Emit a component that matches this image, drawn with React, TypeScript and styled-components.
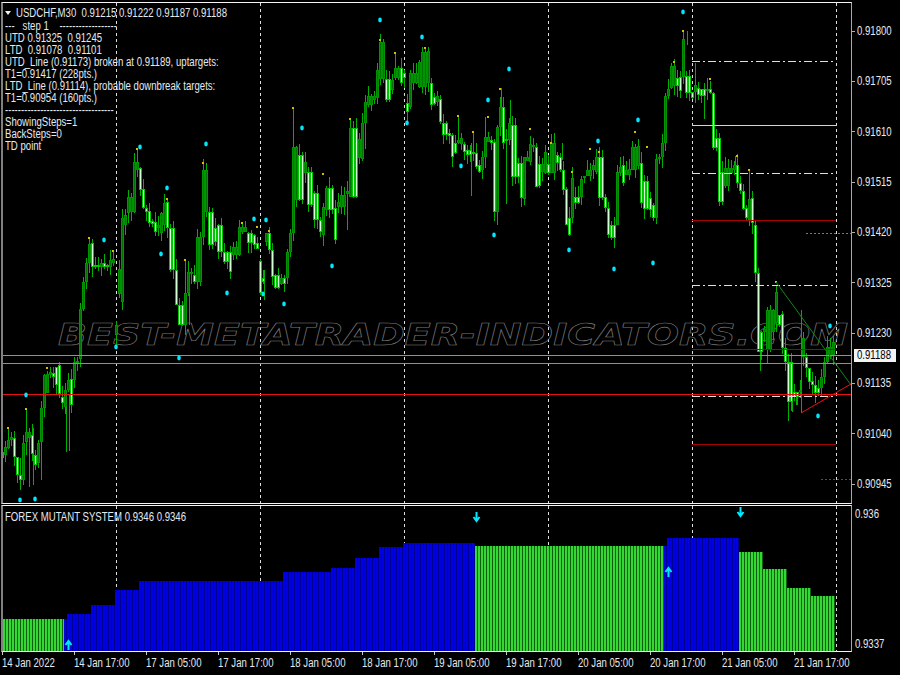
import React from "react";
import styled, { createGlobalStyle } from "styled-components";

const Global = createGlobalStyle`
  html, body { margin: 0; padding: 0; background: #000; }
`;

const FONT = `"Liberation Sans", Arial, sans-serif`;

const Terminal = styled.div`
  width: 900px;
  height: 675px;
  background: #000;
  color: #e4eaf0;
  font-family: ${FONT};
  font-size: 12px;
  display: flex;
  flex-direction: column;
  overflow: hidden;
`;
const PaneRow = styled.div<{ $h: number; $top: number }>`
  display: flex;
  height: ${(p) => p.$h}px;
  padding-top: ${(p) => p.$top}px;
  padding-left: 1px;
  box-sizing: border-box;
`;
const Plot = styled.div`
  position: relative;
  flex: 0 0 851px;
  box-sizing: border-box;
  border-top: 1px solid #f4f4f4;
  border-bottom: 1px solid #f4f4f4;
  border-left: 2px solid #808080;
  border-right: 1px solid #a8a8a8;
  svg { display: block; }
`;
const Squeezed = styled.span`
  display: block;
  width: max-content;
  white-space: pre;
  transform: scaleX(0.8);
  transform-origin: left center;
`;
const Legend = styled.div`
  position: absolute;
  left: 2px;
  top: 4px;
  line-height: 12px;
  pointer-events: none;
`;
const LegendTitle = styled.div`
  display: flex;
  align-items: center;
  gap: 5px;
  margin-bottom: 1px;
`;
const Triangle = styled.span`
  width: 0;
  height: 0;
  border-left: 3px solid transparent;
  border-right: 3px solid transparent;
  border-top: 4px solid #f0f0f0;
`;
const IndicatorCaption = styled.div`
  position: absolute;
  left: 2px;
  top: 5px;
  line-height: 12px;
`;
const PriceAxis = styled.div`
  position: relative;
  flex: 1;
  padding-top: 4px;
  display: flex;
  flex-direction: column;
`;
const PriceLabel = styled.div`
  flex: 0 0 50.33px;
  display: flex;
  align-items: center;
  gap: 2px;
  &::before {
    content: "";
    width: 3px;
    height: 1px;
    background: #b0b0b0;
  }
`;
const CurrentPrice = styled.div`
  position: absolute;
  left: 2px;
  top: 347px;
  width: 42px;
  height: 13px;
  background: #f4f4f4;
  color: #000;
  line-height: 13px;
  padding-left: 3px;
  box-sizing: border-box;
`;
const SubAxis = styled.div`
  flex: 1;
  padding: 2px 0 1px 3px;
  display: flex;
  flex-direction: column;
  justify-content: space-between;
`;
const TimeAxis = styled.div`
  display: flex;
  padding-left: 2px;
  height: 23px;
`;
const TimeLabel = styled.div`
  flex: 0 0 72px;
  position: relative;
  padding-top: 5px;
  line-height: 12px;
  &::before {
    content: "";
    position: absolute;
    left: 0;
    top: 0;
    width: 1px;
    height: 3px;
    background: #c8c8c8;
  }
`;

type C = [number, number, number];
const raw: C[] = [
[2,452,458],[5,447,455],[8,440,448],[11,437,440],[15,438,457],[18,457,475],[21,475,480],[24,443,480],[27,432,442],[30,432,438],[33,435,454],[36,455,465],[39,443,463],[42,408,442],[45,375,408],[48,374,393],[51,372,375],[54,373,377],[57,367,385],[60,365,394],[63,397,403],[66,390,407],[69,380,390],[72,379,405],[75,362,380],[78,361,363],[81,309,359],[84,282,309],[87,263,282],[90,244,263],[93,243,267],[96,265,267],[99,265,267],[102,263,267],[105,263,267],[108,265,267],[111,260,267],[114,259,263],[117,325,335],[120,269,294],[123,218,302],[126,215,225],[129,197,213],[132,197,212],[135,162,212],[138,162,170],[141,168,190],[144,189,208],[147,208,212],[150,211,223],[153,221,224],[156,222,232],[159,225,228],[162,213,233],[165,203,225],[168,202,228],[171,228,270],[176,270,305],[180,305,325],[184,293,325],[187,272,293],[191,272,274],[195,275,282],[198,237,282],[203,170,237],[207,170,212],[210,212,245],[215,228,242],[220,225,252],[225,252,262],[229,252,272],[233,247,255],[239,227,255],[243,227,232],[248,233,243],[254,235,245],[257,243,249],[260,261,293],[263,278,282],[266,233,242],[269,233,250],[272,250,277],[276,275,288],[281,278,284],[285,278,284],[288,252,278],[291,233,252],[294,147,233],[297,147,200],[300,155,200],[304,162,173],[311,172,205],[315,193,220],[319,220,232],[323,207,235],[327,188,210],[330,188,210],[334,208,240],[338,202,207],[342,195,207],[346,191,194],[350,128,197],[354,128,197],[358,139,158],[362,123,159],[365,102,123],[370,96,105],[373,96,100],[377,70,98],[382,42,79],[387,79,100],[391,80,90],[396,68,78],[400,68,83],[403,73,78],[407,103,112],[410,73,107],[414,73,83],[419,62,87],[423,52,87],[427,51,83],[431,83,105],[435,97,104],[438,96,102],[441,99,122],[444,123,135],[448,133,136],[451,135,157],[454,143,153],[457,140,143],[462,138,144],[465,144,152],[468,150,155],[472,152,154],[476,153,167],[480,165,172],[482,157,170],[485,137,157],[488,137,142],[491,140,143],[494,142,212],[498,127,212],[501,107,127],[504,107,143],[507,139,141],[510,123,140],[513,125,177],[517,163,177],[520,163,198],[523,157,199],[526,157,161],[529,144,162],[532,145,147],[534,147,187],[538,164,186],[542,164,172],[545,152,173],[549,164,173],[552,143,173],[556,155,163],[560,157,170],[563,170,190],[566,189,225],[570,218,235],[572,178,218],[577,197,203],[581,179,197],[585,176,178],[588,170,176],[592,165,170],[596,157,172],[601,157,198],[605,197,208],[608,208,235],[612,225,238],[617,172,225],[620,167,173],[624,165,183],[627,170,175],[630,169,175],[633,147,170],[638,146,166],[641,163,203],[646,181,209],[649,198,210],[652,205,218],[655,209,218],[656,159,218],[659,157,159],[661,143,157],[665,96,143],[668,89,96],[671,66,88],[675,66,86],[678,78,86],[680,77,91],[683,39,77],[686,76,93],[689,76,93],[692,92,98],[695,85,92],[698,88,95],[702,89,96],[707,89,91],[710,89,93],[713,93,148],[717,138,148],[719,138,202],[723,172,202],[726,168,186],[730,168,173],[734,165,170],[737,165,183],[740,183,191],[743,191,209],[746,208,218],[750,199,220],[753,198,223],[755,225,273],[758,273,352],[761,332,352],[765,329,332],[768,310,350],[772,310,332],[775,292,323],[779,315,325],[782,314,348],[785,348,362],[788,362,402],[792,362,402],[795,392,397],[799,390,392],[801,338,392],[804,338,357],[807,357,368],[810,368,382],[813,381,385],[815,385,393],[819,388,393],[821,377,388],[824,362,377],[827,347,362],[830,347,357],[834,342,355],
];

const extraWicks: C[] = [
[66,392,452],[69,395,451],[26,408,455],[29,430,487],[33,428,485],[41,408,480],[20,458,490],[8,428,445],
[347,183,230],[365,98,149],[471,143,196],[506,143,204],[501,88,127],[510,100,123],[497,170,225],
[695,63,103],[704,90,119],[749,170,218],[687,31,45],[788,402,421],[760,352,371],[767,315,363],[792,402,412],[796,397,405],[801,310,413],
[735,156,165],[562,143,160],[485,117,140],[458,116,135],[473,132,150],[350,119,128],[395,53,80],[380,40,50],[425,48,60],
[293,108,147],[203,163,170],[137,149,162],[167,199,205],[89,238,245],[113,251,262],[242,223,232],[185,260,290],[189,280,325],[264,270,300],
];

const rnd = (() => {
  let s = 12345;
  return () => {
    s = (s * 1664525 + 1013904223) >>> 0;
    return s / 4294967296;
  };
})();

const candles = Array.from({ length: 278 }, (_, i) => {
  const x = 2 + 3 * i;
  let best = raw[0];
  for (const r of raw) if (Math.abs(r[0] - x) < Math.abs(best[0] - x)) best = r;
  const idx = raw.indexOf(best);
  const prev = raw[Math.max(0, idx - 1)];
  const rising = best[0] === 117 || best[1] + best[2] < prev[1] + prev[2];
  return {
    x,
    top: best[1],
    bot: best[2],
    rising,
    hi: best[1] - Math.round(rnd() * 11),
    lo: best[2] + Math.round(rnd() * 11),
  };
});

const peaks = [[137,149],[203,163],[167,199],[293,108],[242,223],[89,238],[113,251],[8,428],[26,409],[47,368],[185,260],[257,227],[269,231],[380,40],[395,53],[425,48],[323,174],[350,119],[458,116],[473,132],[488,117],[500,89],[530,129],[551,143],[572,172],[590,149],[599,152],[635,132],[647,147],[674,62],[683,31],[710,79],[737,156],[749,170],[776,282]];
const dots = [[140,147],[206,144],[167,188],[254,219],[266,220],[104,240],[161,254],[227,293],[263,294],[284,304],[116,347],[179,358],[26,395],[20,500],[35,499],[380,20],[422,37],[302,128],[407,123],[461,166],[488,100],[509,69],[598,141],[638,120],[683,12],[332,266],[494,235],[569,250],[614,269],[653,263],[830,326],[818,416]];
const gridX = [116.5, 260.5, 404.5, 548.5, 692.5, 836.5];

const MainChart = () => (
  <svg width={848} height={500} viewBox="3 3 848 500">
    <g shapeRendering="crispEdges">
      {gridX.map((x) => (
        <line key={x} x1={x} x2={x} y1={3} y2={503} stroke="#dcdcdc" strokeDasharray="3 3" />
      ))}
    </g>
    <text x={58} y={345} textLength={790} lengthAdjust="spacingAndGlyphs" fontFamily="'DejaVu Sans', sans-serif" fontWeight="bold" fontStyle="italic" fontSize={30} fill="none" stroke="#7c7c7c" strokeWidth={0.6}>
      BEST-METATRADER-INDICATORS.COM
    </text>
    <g shapeRendering="crispEdges">
      {extraWicks.map(([x, a, b], i) => (
        <rect key={i} x={x} y={a} width={1} height={b - a} fill="#00b000" />
      ))}
      {candles.map((c) => (
        <g key={c.x}>
          <rect x={c.x} y={c.hi} width={1} height={c.lo - c.hi} fill="#00b000" />
          <rect x={c.x - 1} y={c.top} width={3} height={Math.max(c.bot - c.top, 1)} fill={c.rising ? "#009400" : "#00c800"} />
          <rect x={c.x} y={c.top + 1} width={1} height={Math.max(c.bot - c.top - 2, 0)} fill={c.rising ? "#007400" : "#d4ffd4"} />
        </g>
      ))}
      {peaks.map(([x, y], i) => (
        <rect key={i} x={x - 1} y={y - 1} width={2} height={2} fill="#d8c000" />
      ))}
      <line x1={3} x2={851} y1={355.5} y2={355.5} stroke="#8494a4" />
      <line x1={3} x2={851} y1={363.5} y2={363.5} stroke="#28d828" />
      <line x1={3} x2={851} y1={394.5} y2={394.5} stroke="#e81010" />
      <line x1={692} x2={833} y1={61.5} y2={61.5} stroke="#dddddd" strokeDasharray="8 3 2 3" />
      <line x1={692} x2={836} y1={125.5} y2={125.5} stroke="#f0f000" />
      <line x1={692} x2={833} y1={173.5} y2={173.5} stroke="#dddddd" strokeDasharray="8 3 2 3" />
      <line x1={692} x2={836} y1={220.5} y2={220.5} stroke="#a80000" />
      <line x1={692} x2={833} y1={285.5} y2={285.5} stroke="#dddddd" strokeDasharray="8 3 2 3" />
      <line x1={692} x2={836} y1={349.5} y2={349.5} stroke="#a80000" />
      <line x1={692} x2={833} y1={396.5} y2={396.5} stroke="#dddddd" strokeDasharray="8 3 2 3" />
      <line x1={692} x2={836} y1={444.5} y2={444.5} stroke="#a80000" />
      <line x1={806} x2={851} y1={233.5} y2={233.5} stroke="#18c018" strokeDasharray="2 2" />
      <line x1={821} x2={851} y1={479.5} y2={479.5} stroke="#e81010" strokeDasharray="2 2" />
    </g>
    <line x1={776} y1={282} x2={851} y2={385} stroke="#108810" />
    <line x1={801} y1={413} x2={851} y2={384} stroke="#f01010" />
    {dots.map(([x, y], i) => (
      <ellipse key={i} cx={x} cy={y} rx={1.8} ry={2.4} fill="#00e8ff" />
    ))}
  </svg>
);

const steps: { from: number; to: number; top: number; green: boolean }[] = [
  { from: 3, to: 64, top: 619, green: true },
  { from: 64, to: 67, top: 619, green: false },
  { from: 67, to: 91, top: 614, green: false },
  { from: 91, to: 115, top: 605, green: false },
  { from: 115, to: 139, top: 590, green: false },
  { from: 139, to: 283, top: 581, green: false },
  { from: 283, to: 331, top: 572, green: false },
  { from: 331, to: 355, top: 568, green: false },
  { from: 355, to: 379, top: 558, green: false },
  { from: 379, to: 403, top: 547, green: false },
  { from: 403, to: 475, top: 543, green: false },
  { from: 475, to: 664, top: 546, green: true },
  { from: 664, to: 667, top: 546, green: false },
  { from: 667, to: 739, top: 538, green: false },
  { from: 739, to: 763, top: 552, green: true },
  { from: 763, to: 787, top: 569, green: true },
  { from: 787, to: 811, top: 588, green: true },
  { from: 811, to: 835, top: 596, green: true },
];

const Arrow = ({ x, y, up }: { x: number; y: number; up: boolean }) => {
  const d = up
    ? `M${x} ${y + 5}V${y - 4}M${x - 3} ${y}L${x} ${y - 4}L${x + 3} ${y}`
    : `M${x} ${y - 5}V${y + 4}M${x - 3} ${y}L${x} ${y + 4}L${x + 3} ${y}`;
  return <path d={d} fill="none" stroke="#00e8ff" strokeWidth={2} />;
};

const SubChart = () => (
  <svg width={848} height={145} viewBox="3 506 848 145">
    <g shapeRendering="crispEdges">
      {gridX.map((x) => (
        <line key={x} x1={x} x2={x} y1={506} y2={651} stroke="#dcdcdc" strokeDasharray="3 3" />
      ))}
      {steps.map((s) => (
        <g key={s.from}>
          <rect x={s.from} y={s.top} width={s.to - s.from} height={651 - s.top} fill={s.green ? "#106010" : "#000090"} />
          {Array.from({ length: Math.ceil((s.to - s.from) / 3) }, (_, i) => (
            <rect key={i} x={s.from + i * 3} y={s.top} width={Math.min(2, s.to - s.from - i * 3)} height={651 - s.top} fill={s.green ? "#34d834" : "#0000e0"} />
          ))}
        </g>
      ))}
    </g>
    <Arrow x={68.5} y={645} up />
    <Arrow x={476.5} y={517} up={false} />
    <Arrow x={668.5} y={572} up />
    <Arrow x={740.5} y={512} up={false} />
  </svg>
);

const prices = ["0.91800", "0.91705", "0.91610", "0.91515", "0.91420", "0.91325", "0.91230", "0.91135", "0.91040", "0.90945"];
const times = ["14 Jan 2022", "14 Jan 17:00", "17 Jan 05:00", "17 Jan 17:00", "18 Jan 05:00", "18 Jan 17:00", "19 Jan 05:00", "19 Jan 17:00", "20 Jan 05:00", "20 Jan 17:00", "21 Jan 05:00", "21 Jan 17:00"];
const legend = [
  "---   step 1    ------------------",
  "UTD 0.91325  0.91245",
  "LTD  0.91078  0.91101",
  "UTD_Line (0.91173) broken at 0.91189, uptargets:",
  "T1=0.91417 (228pts.)",
  "LTD_Line (0.91114), probable downbreak targets:",
  "T1=0.90954 (160pts.)",
  "----------------------------------",
  "ShowingSteps=1",
  "BackSteps=0",
  "TD point",
];

export default function App() {
  return (
    <Terminal>
      <Global />
      <PaneRow $h={504} $top={2}>
        <Plot>
          <MainChart />
          <Legend>
            <LegendTitle>
              <Triangle />
              <Squeezed>USDCHF,M30  0.91215 0.91222 0.91187 0.91188</Squeezed>
            </LegendTitle>
            {legend.map((l, i) => (
              <Squeezed key={i}>{l}</Squeezed>
            ))}
          </Legend>
        </Plot>
        <PriceAxis>
          {prices.map((p) => (
            <PriceLabel key={p}>
              <Squeezed>{p}</Squeezed>
            </PriceLabel>
          ))}
          <CurrentPrice>
            <Squeezed>0.91188</Squeezed>
          </CurrentPrice>
        </PriceAxis>
      </PaneRow>
      <PaneRow $h={148} $top={1}>
        <Plot>
          <SubChart />
          <IndicatorCaption>
            <Squeezed>FOREX MUTANT SYSTEM 0.9346 0.9346</Squeezed>
          </IndicatorCaption>
        </Plot>
        <SubAxis>
          <Squeezed>0.936</Squeezed>
          <Squeezed>0.9337</Squeezed>
        </SubAxis>
      </PaneRow>
      <TimeAxis>
        {times.map((t) => (
          <TimeLabel key={t}>
            <Squeezed>{t}</Squeezed>
          </TimeLabel>
        ))}
      </TimeAxis>
    </Terminal>
  );
}
